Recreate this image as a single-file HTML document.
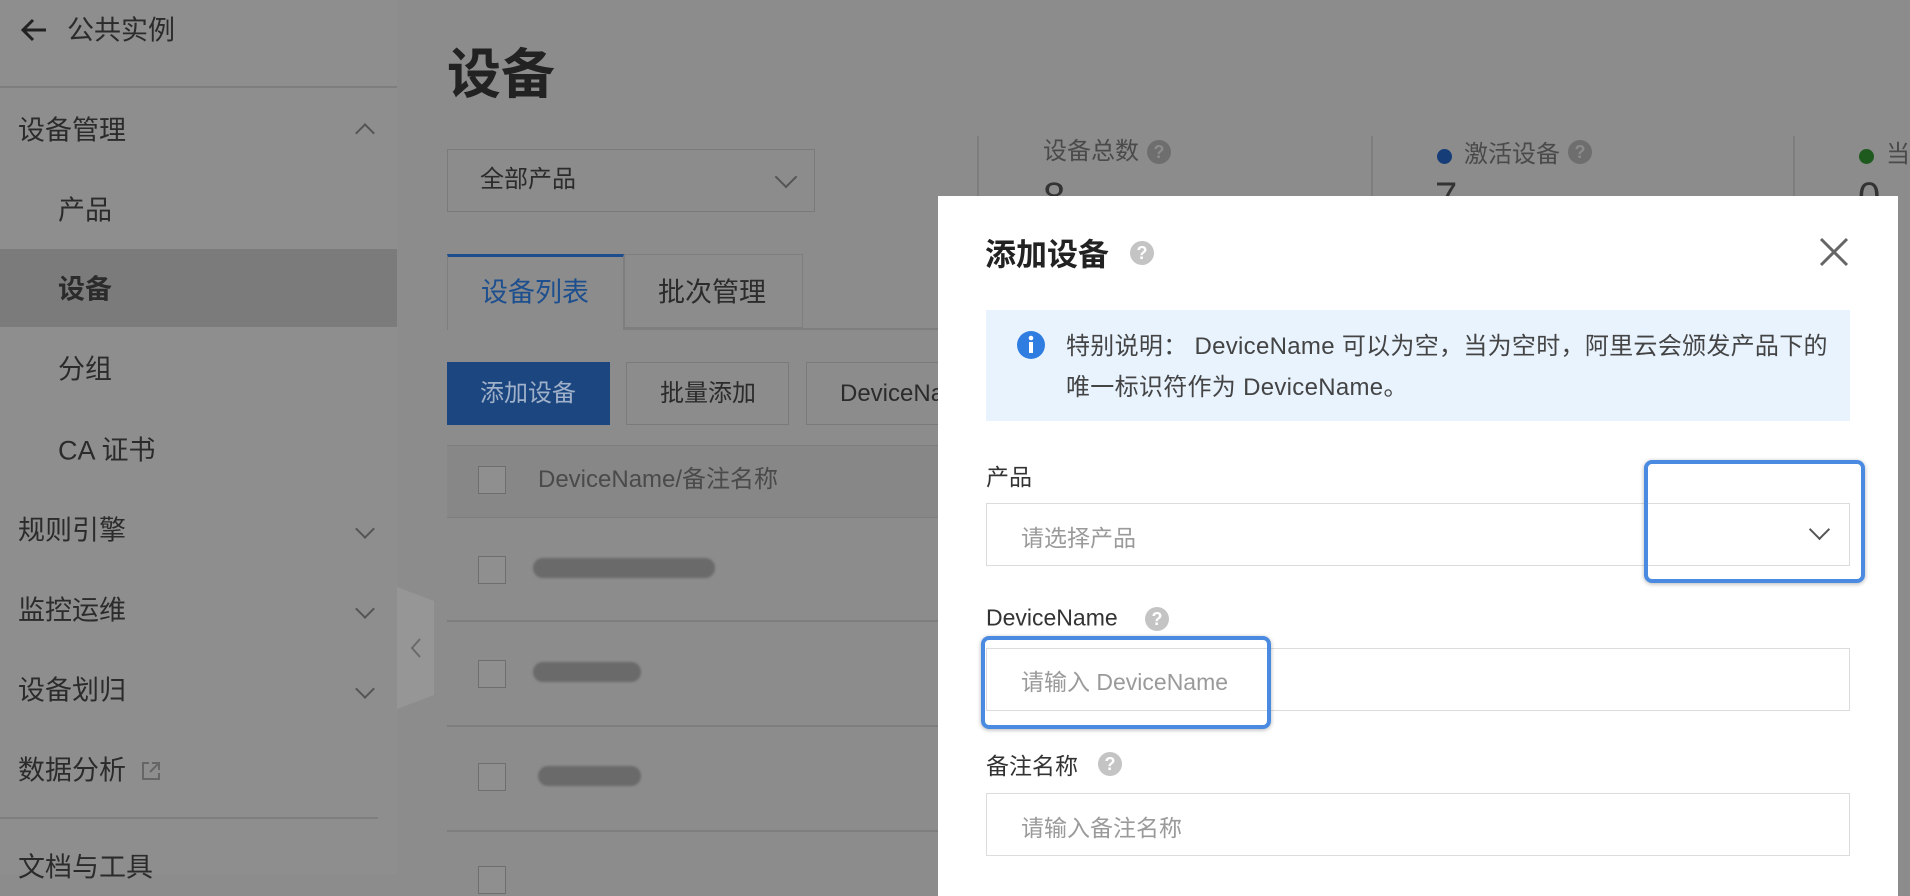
<!DOCTYPE html>
<html><head><meta charset="utf-8"><style>
*{margin:0;padding:0;box-sizing:border-box}
body{width:1910px;height:874px;overflow:hidden;background:#8c8c8c;font-family:"Liberation Sans","Noto Sans CJK SC",sans-serif;position:relative;color:#2b2b2b}
.a{position:absolute;white-space:nowrap}
.side{left:0;top:0;width:397px;height:874px;background:#8e8e8e}
.mi{font-size:27px;line-height:1;transform:translateY(-50%)}
.chev{width:14px;height:14px;border-right:2px solid #555;border-bottom:2px solid #555}
.cb{width:28px;height:28px;border:1.5px solid #6e6e6e;background:#8f8f8f}
.blur{height:20px;background:#6a6a6a;border-radius:10px;filter:blur(1px)}
.q{border-radius:50%;background:#c4c4c4;color:#fff;font-weight:bold;text-align:center}
.inp{border:1.5px solid #dcdcdc;background:#fff}
.ph{font-size:23px;color:#9a9a9a;transform:translateY(-50%)}
.lab{font-size:23px;color:#333;transform:translateY(-50%)}
.hl{border:4px solid #4a8ae0;border-radius:8px;box-shadow:0 1px 4px rgba(0,0,0,.3)}
</style></head><body>
<div class="a side"></div>
<div class="a" style="left:0;top:249px;width:397px;height:78px;background:#7b7b7b"></div>
<svg class="a" style="left:20px;top:17px" width="28" height="26" viewBox="0 0 28 26"><path d="M26 13H4M13 3L3 13l10 10" stroke="#222" stroke-width="3" fill="none"/></svg>
<div class="a mi" style="left:67px;top:31px;font-size:27px">公共实例</div>
<div class="a" style="left:0;top:86px;width:397px;height:2px;background:#7e7e7e"></div>
<div class="a mi" style="left:18px;top:131px">设备管理</div>
<div class="a chev" style="left:358px;top:126px;transform:rotate(-135deg)"></div>
<div class="a mi" style="left:58px;top:211px">产品</div>
<div class="a mi" style="left:58px;top:290px;font-weight:bold">设备</div>
<div class="a mi" style="left:58px;top:370px">分组</div>
<div class="a mi" style="left:58px;top:451px">CA 证书</div>
<div class="a mi" style="left:18px;top:531px">规则引擎</div>
<div class="a chev" style="left:358px;top:522px;transform:rotate(45deg)"></div>
<div class="a mi" style="left:18px;top:611px">监控运维</div>
<div class="a chev" style="left:358px;top:602px;transform:rotate(45deg)"></div>
<div class="a mi" style="left:18px;top:691px">设备划归</div>
<div class="a chev" style="left:358px;top:682px;transform:rotate(45deg)"></div>
<div class="a mi" style="left:18px;top:771px">数据分析</div>
<svg class="a" style="left:140px;top:760px" width="22" height="22"><path d="M9 3H3v16h16v-6M12 3h7v7M19 3l-9 9" stroke="#666" stroke-width="2" fill="none"/></svg>
<div class="a" style="left:0;top:817px;width:378px;height:2px;background:#7e7e7e"></div>
<div class="a mi" style="left:18px;top:868px">文档与工具</div>
<svg class="a" style="left:397px;top:587px" width="38" height="123"><path d="M0 0L37 14V108L0 122Z" fill="#969696"/><path d="M23 52l-8 9 8 9" stroke="#6a6a6a" stroke-width="2" fill="none"/></svg>

<div class="a" style="left:447px;top:30px;font-size:54px;font-weight:bold;color:#222">设备</div>
<div class="a" style="left:447px;top:149px;width:368px;height:63px;border:1.5px solid #7a7a7a"></div>
<div class="a mi" style="left:480px;top:180px;font-size:24px">全部产品</div>
<div class="a chev" style="left:778px;top:169px;transform:rotate(45deg);width:16px;height:16px"></div>
<div class="a" style="left:977px;top:136px;width:1.5px;height:60px;background:#7e7e7e"></div>
<div class="a" style="left:1371px;top:136px;width:1.5px;height:60px;background:#7e7e7e"></div>
<div class="a" style="left:1793px;top:136px;width:1.5px;height:60px;background:#7e7e7e"></div>
<div class="a mi" style="left:1043px;top:152px;font-size:24px;color:#4a4a4a">设备总数</div>
<div class="a q" style="left:1147px;top:140px;width:24px;height:24px;background:#6e6e6e;color:#8c8c8c;font-size:18px;line-height:24px">?</div>
<div class="a" style="left:1437px;top:149px;width:15px;height:15px;border-radius:50%;background:#163d78"></div>
<div class="a mi" style="left:1464px;top:155px;font-size:24px;color:#4a4a4a">激活设备</div>
<div class="a q" style="left:1568px;top:140px;width:24px;height:24px;background:#6e6e6e;color:#8c8c8c;font-size:18px;line-height:24px">?</div>
<div class="a" style="left:1859px;top:149px;width:15px;height:15px;border-radius:50%;background:#1e5a1e"></div>
<div class="a mi" style="left:1886px;top:155px;font-size:24px;color:#4a4a4a">当</div>
<div class="a" style="left:1043px;top:175px;font-size:40px;color:#333">8</div>
<div class="a" style="left:1435px;top:175px;font-size:40px;color:#333">7</div>
<div class="a" style="left:1858px;top:175px;font-size:40px;color:#333">0</div>

<div class="a" style="left:447px;top:328px;width:491px;height:2px;background:#7e7e7e"></div>
<div class="a" style="left:447px;top:254px;width:177px;height:76px;border:1.5px solid #7e7e7e;border-top:3px solid #1d4d8c;border-bottom:none;background:#8c8c8c"></div>
<div class="a mi" style="left:481px;top:293px;color:#1d4f8f">设备列表</div>
<div class="a" style="left:624px;top:254px;width:179px;height:74px;border:1.5px solid #7e7e7e"></div>
<div class="a mi" style="left:658px;top:293px">批次管理</div>
<div class="a" style="left:447px;top:362px;width:163px;height:63px;background:#1b4680"></div>
<div class="a mi" style="left:480px;top:394px;font-size:24px;color:#9fb0c8">添加设备</div>
<div class="a" style="left:626px;top:362px;width:163px;height:63px;border:1.5px solid #7a7a7a"></div>
<div class="a mi" style="left:660px;top:394px;font-size:24px">批量添加</div>
<div class="a" style="left:806px;top:362px;width:140px;height:63px;border:1.5px solid #7a7a7a"></div>
<div class="a mi" style="left:840px;top:394px;font-size:24px">DeviceNa</div>
<div class="a" style="left:447px;top:445px;width:491px;height:73px;background:#878787;border-top:1.5px solid #7e7e7e;border-bottom:1.5px solid #7e7e7e"></div>
<div class="a cb" style="left:478px;top:466px"></div>
<div class="a mi" style="left:538px;top:480px;font-size:24px;color:#4a4a4a">DeviceName/备注名称</div>
<div class="a cb" style="left:478px;top:556px"></div><div class="a blur" style="left:533px;top:558px;width:182px"></div>
<div class="a" style="left:447px;top:620px;width:491px;height:1.5px;background:#7e7e7e"></div>
<div class="a cb" style="left:478px;top:660px"></div><div class="a blur" style="left:533px;top:662px;width:108px"></div>
<div class="a" style="left:447px;top:725px;width:491px;height:1.5px;background:#7e7e7e"></div>
<div class="a cb" style="left:478px;top:763px"></div><div class="a blur" style="left:538px;top:766px;width:103px"></div>
<div class="a" style="left:447px;top:830px;width:491px;height:1.5px;background:#7e7e7e"></div>
<div class="a cb" style="left:478px;top:866px"></div>

<div class="a" style="left:938px;top:196px;width:960px;height:700px;background:#fff"></div>
<div class="a" style="left:985px;top:252px;font-size:31px;font-weight:bold;color:#222;transform:translateY(-50%)">添加设备</div>
<div class="a q" style="left:1130px;top:241px;width:24px;height:24px;font-size:18px;line-height:24px">?</div>
<svg class="a" style="left:1818px;top:236px" width="32" height="32"><path d="M3 3L29 29M29 3L3 29" stroke="#666" stroke-width="3"/></svg>
<div class="a" style="left:986px;top:310px;width:864px;height:111px;background:#e8f3fe"></div>
<svg class="a" style="left:1017px;top:331px" width="28" height="28"><circle cx="14" cy="14" r="14" fill="#2f7de1"/><rect x="12" y="11" width="4" height="11" fill="#fff"/><circle cx="14" cy="7" r="2.3" fill="#fff"/></svg>
<div class="a" style="left:1066px;top:326px;font-size:24px;color:#444;line-height:41px;letter-spacing:0.3px">特别说明：&nbsp;DeviceName 可以为空，当为空时，阿里云会颁发产品下的<br>唯一标识符作为 DeviceName。</div>
<div class="a lab" style="left:986px;top:475px">产品</div>
<div class="a inp" style="left:986px;top:503px;width:864px;height:63px"></div>
<div class="a ph" style="left:1021px;top:536px">请选择产品</div>
<div class="a chev" style="left:1812px;top:522px;transform:rotate(45deg);width:15px;height:15px;border-color:#555"></div>
<div class="a hl" style="left:1644px;top:460px;width:221px;height:123px"></div>
<div class="a lab" style="left:986px;top:618px">DeviceName</div>
<div class="a q" style="left:1145px;top:607px;width:24px;height:24px;font-size:18px;line-height:24px">?</div>
<div class="a inp" style="left:986px;top:648px;width:864px;height:63px"></div>
<div class="a ph" style="left:1021px;top:680px">请输入 DeviceName</div>
<div class="a hl" style="left:981px;top:636px;width:290px;height:93px"></div>
<div class="a lab" style="left:986px;top:764px">备注名称</div>
<div class="a q" style="left:1098px;top:752px;width:24px;height:24px;font-size:18px;line-height:24px">?</div>
<div class="a inp" style="left:986px;top:793px;width:864px;height:63px"></div>
<div class="a ph" style="left:1021px;top:826px">请输入备注名称</div>
</body></html>
